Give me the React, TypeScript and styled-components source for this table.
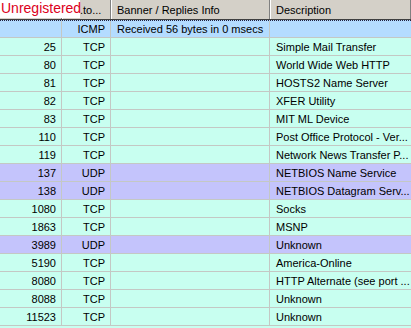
import { createGlobalStyle, styled } from 'styled-components'

const GlobalStyle = createGlobalStyle`
  body {
    margin: 0;
    background: #c8fff0;
    font-family: "Liberation Sans", Arial, sans-serif;
    font-size: 11px;
  }
`

const COLS = '62px 49px 159px 1fr'

type Kind = 'icmp' | 'tcp' | 'udp'

const rowBg: Record<Kind, string> = {
  icmp: '#b4dcff',
  tcp: '#c8fff0',
  udp: '#c4c4fc',
}

const rows: { port: string; proto: string; banner: string; desc: string; kind: Kind }[] = [
  { port: '', proto: 'ICMP', banner: 'Received 56 bytes in 0 msecs', desc: '', kind: 'icmp' },
  { port: '25', proto: 'TCP', banner: '', desc: 'Simple Mail Transfer', kind: 'tcp' },
  { port: '80', proto: 'TCP', banner: '', desc: 'World Wide Web HTTP', kind: 'tcp' },
  { port: '81', proto: 'TCP', banner: '', desc: 'HOSTS2 Name Server', kind: 'tcp' },
  { port: '82', proto: 'TCP', banner: '', desc: 'XFER Utility', kind: 'tcp' },
  { port: '83', proto: 'TCP', banner: '', desc: 'MIT ML Device', kind: 'tcp' },
  { port: '110', proto: 'TCP', banner: '', desc: 'Post Office Protocol - Ver...', kind: 'tcp' },
  { port: '119', proto: 'TCP', banner: '', desc: 'Network News Transfer P...', kind: 'tcp' },
  { port: '137', proto: 'UDP', banner: '', desc: 'NETBIOS Name Service', kind: 'udp' },
  { port: '138', proto: 'UDP', banner: '', desc: 'NETBIOS Datagram Serv...', kind: 'udp' },
  { port: '1080', proto: 'TCP', banner: '', desc: 'Socks', kind: 'tcp' },
  { port: '1863', proto: 'TCP', banner: '', desc: 'MSNP', kind: 'tcp' },
  { port: '3989', proto: 'UDP', banner: '', desc: 'Unknown', kind: 'udp' },
  { port: '5190', proto: 'TCP', banner: '', desc: 'America-Online', kind: 'tcp' },
  { port: '8080', proto: 'TCP', banner: '', desc: 'HTTP Alternate (see port ...', kind: 'tcp' },
  { port: '8088', proto: 'TCP', banner: '', desc: 'Unknown', kind: 'tcp' },
  { port: '11523', proto: 'TCP', banner: '', desc: 'Unknown', kind: 'tcp' },
]

export default function App() {
  return (
    <>
      <GlobalStyle />
      <ListView>
        <Header>
          <HeadCell />
          <HeadCell $indent={17}>.to...</HeadCell>
          <HeadCell>Banner / Replies Info</HeadCell>
          <HeadCell>Description</HeadCell>
          <Unregistered>Unregistered</Unregistered>
        </Header>
        {rows.map((r, i) => (
          <Row key={i} $bg={rowBg[r.kind]} $focused={i === 0}>
            <Cell $right>{r.port}</Cell>
            <Cell $right>{r.proto}</Cell>
            <Cell>{r.banner}</Cell>
            <Cell>{r.desc}</Cell>
          </Row>
        ))}
      </ListView>
    </>
  )
}

const ListView = styled.div`
  width: 411px;
  height: 328px;
  overflow: hidden;
  background: #c8fff0;
`

const Header = styled.div`
  position: relative;
  display: grid;
  grid-template-columns: ${COLS};
  height: 19px;
  background: #d4d0c8;
  border-bottom: 1px solid #404040;
`

const HeadCell = styled.div<{ $indent?: number }>`
  display: flex;
  align-items: center;
  padding-left: ${p => p.$indent ?? 5}px;
  color: #000;
  white-space: nowrap;
  overflow: hidden;
  border-left: 1px solid #ffffff;
  border-right: 1px solid #808080;
  box-shadow: 1px 0 0 #404040;
  &:first-child {
    border-left: none;
  }
`

const Unregistered = styled.div`
  position: absolute;
  left: 0;
  top: 0;
  height: 18px;
  width: 80px;
  background: #ffffff;
  color: #dc0020;
  font-size: 14px;
  line-height: 17px;
  padding-left: 1px;
  box-sizing: border-box;
`

const Row = styled.div<{ $bg: string; $focused?: boolean }>`
  display: grid;
  grid-template-columns: ${COLS};
  height: 18px;
  box-sizing: border-box;
  background: ${p => p.$bg};
  border-bottom: 1px solid #c4c8c4;
  border-top: ${p => (p.$focused ? '1px dotted #202040' : 'none')};
  color: #000;
`

const Cell = styled.div<{ $right?: boolean }>`
  display: flex;
  align-items: center;
  justify-content: ${p => (p.$right ? 'flex-end' : 'flex-start')};
  padding: ${p => (p.$right ? '0 5px 0 0' : '0 0 0 6px')};
  border-right: 1px solid #c4c8c4;
  white-space: nowrap;
  overflow: hidden;
  &:last-child {
    border-right: none;
  }
`
